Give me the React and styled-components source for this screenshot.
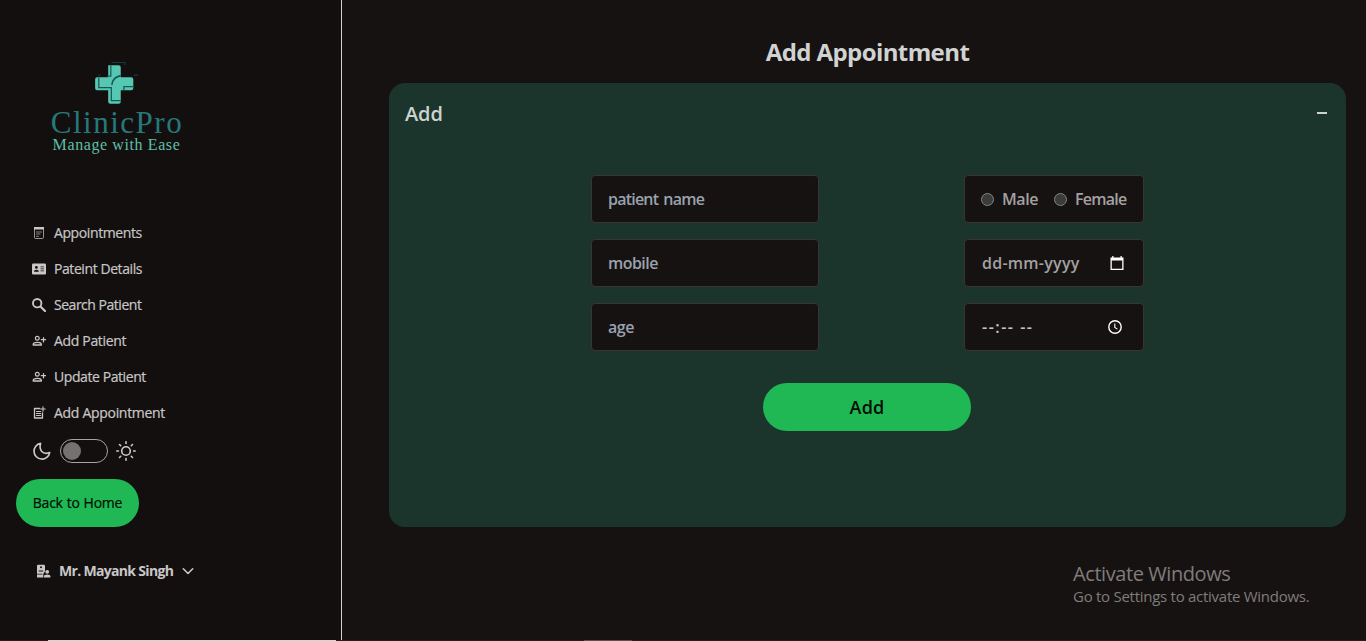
import React from 'react';
import styled, { createGlobalStyle } from 'styled-components';

const Global = createGlobalStyle`
  * { box-sizing: border-box; }
  body { margin: 0; background: #171212; overflow: hidden; }
  button, input { font-family: inherit; }
`;
const Screen = styled.div`
  height: 641px; width: 1366px; display: flex; flex-direction: column; position: relative;
  font-family: "Open Sans", "Noto Sans", sans-serif; color: #ccc; background: #171212;
`;
const Layout = styled.div`display: flex; height: 640px;`;
const Sidebar = styled.aside`
  width: 342px; flex: none; background: #140f0f; border-right: 1px solid #d4d4d4;
  display: flex; flex-direction: column; align-items: flex-start;
`;
const Brand = styled.div`width: 232px; height: 215px; padding-top: 61px; display: flex; flex-direction: column; align-items: center;`;
const BrandMark = styled.svg`width: 46px; height: 46px; margin-right: 2px;`;
const BrandName = styled.div`
  font: 31px/26px "Liberation Serif", serif; letter-spacing: 1.5px; color: #25797b; white-space: nowrap; margin: 3px 0 1px 2px;
`;
const Tagline = styled.div`
  font: 16px/16px "Liberation Serif", serif; letter-spacing: 0.6px; color: #5cc0a8; white-space: nowrap; padding-left: 1px;
`;
const Label = styled.span`letter-spacing: ${p => p.$ls || 0}px; word-spacing: ${p => p.$ws || 0}px; white-space: nowrap;`;
const Nav = styled.nav`display: flex; flex-direction: column; padding-left: 32px;`;
const NavItem = styled.a`
  display: flex; align-items: center; gap: 8px; height: 36px; font-size: 14px; font-weight: 500; line-height: 20px;
  color: #c8c7c7; -webkit-text-stroke: 0.2px #c8c7c7;
`;
const Icon = styled.svg`width: ${p => p.$s || 14}px; height: ${p => p.$s || 14}px; flex: none; display: block;`;
const ThemeRow = styled.div`display: flex; align-items: center; gap: 8px; padding-left: 32px; height: 40px;`;
const Toggle = styled.div`width: 48px; height: 24px; border: 1px solid #a5a3a3; border-radius: 12px; padding: 2px; display: flex;`;
const Knob = styled.div`width: 18px; height: 18px; border-radius: 50%; background: #747171;`;
const Pill = styled.button`
  width: ${p => p.$w}px; height: 48px; border: 0; border-radius: 24px; background: #1fb855; color: #000c02;
  font-size: ${p => p.$fs}px; font-weight: ${p => p.$fw || 600}; padding: 0 0 ${p => p.$pb || 0}px; text-align: center; display: block;
  -webkit-text-stroke: ${p => p.$stroke || 0}px #000c02;
`;
const HomeSlot = styled.div`padding: 8px 0 0 16px;`;
const Profile = styled.div`display: flex; align-items: center; padding-left: 36px; margin-top: 34px; height: 20px; font-size: 14px; font-weight: 700; color: #c8c7c7;`;
const ProfileName = styled.div`width: 114px; height: 20px; line-height: 20px; margin: 0 8px 0 8px; display: flex;`;
const Main = styled.main`flex: 1; padding: 34px 20px 0 47px;`;
const Title = styled.h1`margin: 0 0 13px; font-size: 24px; line-height: 36px; font-weight: 700; text-align: center; color: #d0d3d2;`;
const Panel = styled.section`height: 444px; border-radius: 16px; background: #1b352d;`;
const PanelHead = styled.header`
  display: flex; justify-content: space-between; align-items: center; height: 60px; padding: 0 19px 0 16px;
  font-size: 20px; font-weight: 600; color: #ccd2cf;
`;
const Minus = styled.span`width: 10px; height: 2px; background: #ccd2cf;`;
const Form = styled.div`display: flex; justify-content: space-between; width: 553px; margin: 32px 0 32px 202px;`;
const Column = styled.div`display: flex; flex-direction: column; gap: 16px; width: ${p => p.$w}px;`;
const Field = styled.div`
  height: 48px; border: 1px solid #3a3433; border-radius: 4px; background: #171212; padding: 0 16px;
  display: flex; align-items: center; font-size: 16px; font-weight: 600; color: ${p => p.$c || '#99a2ae'};
`;
const Radio = styled.span`width: 13px; height: 13px; border: 1px solid #858585; border-radius: 50%; background: #3b3b3b; margin-right: 8px; flex: none;`;
const Choice = styled.label`display: flex; align-items: center; width: ${p => p.$w}px; flex: none;`;
const PickerField = styled(Field)`justify-content: space-between; padding: 0 ${p => p.$pr}px 0 17px;`;
const SubmitSlot = styled.div`padding-left: 374px;`;
const Watermark = styled.div`position: absolute; left: 1073px; top: 560px; color: #7f7c7c; white-space: nowrap;`;
const MarkTitle = styled.div`font-size: 20px; line-height: 27px;`;
const MarkText = styled.div`font-size: 15px; line-height: 18px;`;
const Taskbar = styled.div`height: 1px; background: #2c1e16; display: flex; padding-left: 48px;`;
const ActiveWindow = styled.div`width: ${p => p.$w}px; margin-right: ${p => p.$gap || 0}px; background: ${p => p.$c};`;

const stroke = { fill: 'none', stroke: 'currentColor', strokeLinecap: 'round', strokeLinejoin: 'round' };

const Logo = () => (
  <BrandMark viewBox="0 0 44 44">
    <path d="M15.5 4h10q2 0 2 2v9.500h10q2 0 2 2V26q0 2-2 2H27.500v11q0 2-2 2h-8q-2 0-2-2V28H5q-2 0-2-2v-8.500q0-2 2-2h10.500z" fill="#56c7b2" />
    <path d="M14.500 14.500H18V4M6.500 16v9.500H18.500V38h9M40 24.500h-9.500V28" fill="none" stroke="#175b58" strokeWidth="1.200" />
    <path d="M19 23c.3-5 3.500-8 8.500-9" fill="none" stroke="#175b58" strokeWidth="1.500" />
    <path d="M18.500 1.500h13V4M40 13.500h4M6 13.500h2" fill="none" stroke="#153d3b" strokeWidth="1" />
  </BrandMark>
);
const NoteIcon = () => (
  <Icon viewBox="0 0 14 14"><rect x="2.500" y="1.500" width="9" height="11" rx="1" {...stroke} strokeWidth=".9" opacity=".8" /><path d="M2 1h10v2.500H2z" fill="currentColor" /><path d="M4.500 6h5M4.500 8h3.500M4.500 10.300h2" {...stroke} strokeWidth=".8" opacity=".8" /></Icon>
);
const CardIcon = () => (
  <Icon viewBox="0 0 14 14"><rect x="0" y="1.500" width="14" height="11" rx="1.300" fill="currentColor" /><circle cx="4.400" cy="5.400" r="1.400" fill="#140f0f" /><path d="M1.900 9.700q0-2 2.500-2t2.500 2zM8.500 4.500H12v.8H8.500zM8.500 6.500H12v.8H8.500zM8.500 8.500H12v.7H8.500z" fill="#140f0f" /></Icon>
);
const SearchIcon = () => (
  <Icon viewBox="0 0 14 14"><circle cx="5.200" cy="5.200" r="4.200" {...stroke} strokeWidth="1.900" /><path d="M8.700 8.700 13 13" {...stroke} strokeWidth="2.200" /></Icon>
);
const PersonAddIcon = () => (
  <Icon viewBox="0 0 14 14"><circle cx="5.300" cy="4.300" r="1.900" {...stroke} strokeWidth="1.200" /><path d="M1.200 11v-.5q0-2.200 4.100-2.200t4.100 2.200v.5z" {...stroke} strokeWidth="1.300" /><path d="M11.500 3.500v4.500M9.300 5.700h4.500" {...stroke} strokeWidth="1.200" /></Icon>
);
const PostAddIcon = () => (
  <Icon viewBox="0 0 14 14"><path d="M7.800 2.500H2.500v9.500H10.500V6.800" {...stroke} strokeWidth="1.300" /><path d="M11 .8v4.400M8.800 3h4.400M4.500 5.500H8.700M4.500 7.500H8.700M4.500 9.500H8.700" {...stroke} strokeWidth="1.100" /></Icon>
);
const MoonIcon = () => (
  <Icon $s={20} viewBox="0 0 20 20"><path d="M8.600 2.400A7.900 7.900 0 1 0 17.700 11.600Q12.500 13.600 9.600 10.200Q7.200 7 8.600 2.400Z" {...stroke} strokeWidth="1.600" /></Icon>
);
const SunIcon = () => (
  <Icon $s={20} viewBox="0 0 20 20"><circle cx="10" cy="10" r="4.300" {...stroke} strokeWidth="1.600" /><path d="M10 .8v1.600M10 17.600v1.600M.8 10h1.600M17.600 10h1.600M3.500 3.500l1.200 1.200M15.300 15.300l1.200 1.200M16.500 3.500l-1.200 1.200M4.700 15.300l-1.200 1.200" {...stroke} strokeWidth="1.600" /></Icon>
);
const DoctorIcon = () => (
  <Icon $s={15} viewBox="0 0 15 15"><path d="M2.200.8h5.600q1.200 0 1.200 1.200v5.200L7.300 10v3.500H1V2Q1 .8 2.200.8z" fill="currentColor" /><circle cx="5" cy="3.300" r="1" fill="#140f0f" /><path d="M2.700 6.600h4.500v.9H2.700zM1 9.800h5.500v.8H1z" fill="#140f0f" /><circle cx="11.200" cy="7.800" r="1.900" fill="currentColor" /><path d="M8 13.500v-1.200q0-1.900 3.200-1.900t3.200 1.900v1.200z" fill="currentColor" /></Icon>
);
const ChevronIcon = () => (
  <Icon viewBox="0 0 14 14"><path d="m2.300 4.800 4.700 4.700 4.700-4.700" {...stroke} strokeWidth="1.600" /></Icon>
);
const CalendarIcon = () => (
  <Icon viewBox="0 0 14 14"><path d="M.5 1.500h13V14H.5zM1.800 4.500v8.200h10.400V4.500z" fill="#fff" fillRule="evenodd" /><path d="M2.200 0h1.300v2H2.200zM10.500 0h1.300v2h-1.300z" fill="#fff" /></Icon>
);
const ClockIcon = () => (
  <Icon viewBox="0 0 14 14"><circle cx="7" cy="7" r="6.200" fill="none" stroke="#fff" strokeWidth="1.400" /><path d="M6.800 3.500v4l2.600 1.600" fill="none" stroke="#fff" strokeWidth="1.100" /></Icon>
);

const items = [
  ['Appointments', NoteIcon, -0.4],
  ['Pateint Details', CardIcon, -0.42],
  ['Search Patient', SearchIcon, -0.48],
  ['Add Patient', PersonAddIcon, -0.33],
  ['Update Patient', PersonAddIcon, -0.42],
  ['Add Appointment', PostAddIcon, -0.3],
];

export default function App() {
  return (
    <Screen>
      <Global />
      <Layout>
        <Sidebar>
          <Brand><Logo /><BrandName>ClinicPro</BrandName><Tagline>Manage with Ease</Tagline></Brand>
          <Nav>
            {items.map(([text, Glyph, ls]) => <NavItem key={text}><Glyph /><Label $ls={ls}>{text}</Label></NavItem>)}
          </Nav>
          <ThemeRow><MoonIcon /><Toggle><Knob /></Toggle><SunIcon /></ThemeRow>
          <HomeSlot><Pill $w={123} $fs={14} $fw={500} $pb={2} $stroke={0.2}><Label $ls={-0.25} $ws={0.6}>Back to Home</Label></Pill></HomeSlot>
          <Profile><DoctorIcon /><ProfileName><Label $ls={-0.68}>Mr. Mayank Singh</Label></ProfileName><ChevronIcon /></Profile>
        </Sidebar>
        <Main>
          <Title><Label $ls={-0.6}>Add Appointment</Label></Title>
          <Panel>
            <PanelHead><Label $ls={-0.1}>Add</Label><Minus /></PanelHead>
            <Form>
              <Column $w={228}>
                <Field><Label $ls={-0.78} $ws={1.6}>patient name</Label></Field>
                <Field><Label $ls={-0.55}>mobile</Label></Field>
                <Field><Label $ls={-0.5}>age</Label></Field>
              </Column>
              <Column $w={180}>
                <Field $c="#a3a1a1">
                  <Choice $w={73}><Radio /><Label $ls={-0.4}>Male</Label></Choice>
                  <Choice $w={75}><Radio /><Label $ls={-0.75}>Female</Label></Choice>
                </Field>
                <PickerField $c="#a3a1a1" $pr={19}><Label $ls={0.25}>dd-mm-yyyy</Label><CalendarIcon /></PickerField>
                <PickerField $c="#c5c3c3" $pr={21}><Label $ls={1.5}>--:-- --</Label><ClockIcon /></PickerField>
              </Column>
            </Form>
            <SubmitSlot><Pill $w={208} $fs={18}><Label $ls={0.2}>Add</Label></Pill></SubmitSlot>
          </Panel>
        </Main>
      </Layout>
      <Taskbar><ActiveWindow $w={288} $gap={248} $c="#d8d5d3" /><ActiveWindow $w={48} $c="#5d514a" /></Taskbar>
      <Watermark>
        <MarkTitle><Label $ls={-0.42}>Activate Windows</Label></MarkTitle>
        <MarkText><Label $ls={-0.27}>Go to Settings to activate Windows.</Label></MarkText>
      </Watermark>
    </Screen>
  );
}
